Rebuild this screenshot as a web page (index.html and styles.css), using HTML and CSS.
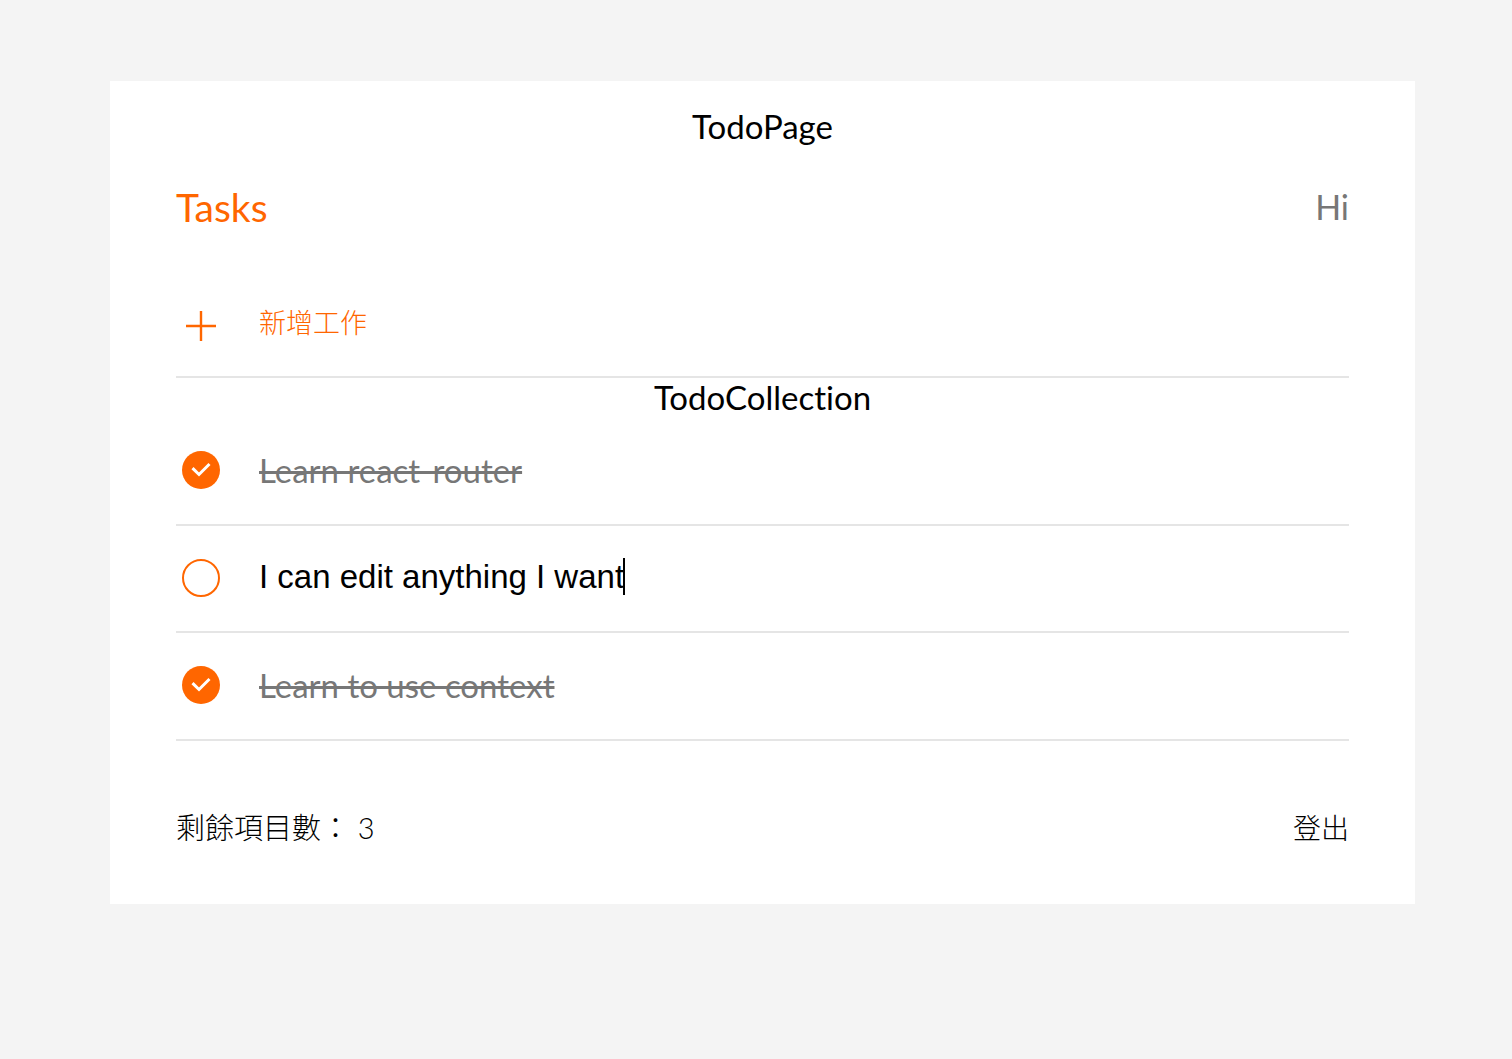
FILE: index.html
```html
<!DOCTYPE html>
<html lang="zh-Hant">
<head>
<meta charset="utf-8">
<meta name="viewport" content="width=device-width, initial-scale=1">
<title>TodoPage</title>
<link rel="stylesheet" href="styles.css">
</head>
<body>
<main class="page">
  <div class="label">TodoPage</div>
  <header class="header">
    <h1 class="title">Tasks</h1>
    <span class="user">Hi</span>
  </header>
  <form class="row row-add">
    <label class="icon" for="new-task">
      <svg width="30" height="30" viewBox="0 0 30 30" aria-hidden="true"><path d="M15 0v30M0 15h30" stroke="#ff6600" stroke-width="2.4" fill="none"/></svg>
    </label>
    <input class="field field-add" id="new-task" type="text" placeholder="新增工作" aria-label="新增工作">
  </form>
  <div class="label">TodoCollection</div>
  <ul class="list">
    <li class="row">
      <input class="check" type="checkbox" id="t1" checked>
      <label class="task" for="t1">Learn react-router</label>
    </li>
    <li class="row">
      <input class="check" type="checkbox" id="t2" aria-label="I can edit anything I want">
      <div class="editor">
        <input class="field field-edit" id="edit" type="text" value="I can edit anything I want" aria-label="編輯工作">
        <span class="caret"></span>
      </div>
    </li>
    <li class="row">
      <input class="check" type="checkbox" id="t3" checked>
      <label class="task" for="t3">Learn to use context</label>
    </li>
  </ul>
  <footer class="footer">
    <p class="count">剩餘項目數： 3</p>
    <button class="logout" type="button">登出</button>
  </footer>
</main>
</body>
</html>
```
FILE: styles.css
```css
* { box-sizing: border-box; }
body {
  margin: 0;
  padding: 81px 97px 81px 110px;
  background: #f4f4f4;
  color: #000;
  font: 33px/40px Lato, "Noto Sans CJK TC", sans-serif;
  font-variant-ligatures: none;
}
.page { background: #fff; padding: 26px 66px 56px; }
.label { text-align: center; line-height: 38px; }
.header {
  display: flex;
  justify-content: space-between;
  align-items: center;
  margin-top: 37px;
  line-height: 50px;
}
.title { margin: 0; color: #ff6600; font-size: 39px; font-weight: 400; }
.user { color: #777; font-size: 34px; }
.row {
  display: flex;
  align-items: center;
  gap: 33px;
  height: 108px;
  padding-bottom: 2px;
  border-bottom: 2px solid #e5e5e5;
}
.row-add { margin-top: 38px; padding-bottom: 2px; }
.icon { display: flex; justify-content: center; width: 50px; padding-top: 8px; }
.field {
  flex: 1;
  min-width: 0;
  height: 40px;
  padding: 0;
  border: 0;
  outline: 0;
  background: none;
  color: #000;
  font: 33px/40px "Liberation Sans", sans-serif;
}
.field-add { font: 300 27px/40px "Noto Sans CJK TC", sans-serif; }
.field-add::placeholder { color: #ff6600; opacity: 1; }
.editor { display: flex; flex: 1; align-items: center; min-width: 0; padding-bottom: 2px; }
.field-edit { flex: none; field-sizing: content; max-width: 100%; caret-color: transparent; }
.caret { flex: none; width: 2px; height: 37px; margin-left: -1px; background: #000; }
.list { margin: 2px 0 0; padding: 0; list-style: none; }
.list .row:nth-child(2) { height: 107px; }
.check {
  appearance: none;
  flex: none;
  width: 38px;
  height: 38px;
  margin: 0 6px;
  border: 2px solid #ff6600;
  border-radius: 50%;
}
.check:checked {
  border: 0;
  background: #ff6600 url("data:image/svg+xml,%3Csvg xmlns='http://www.w3.org/2000/svg' viewBox='0 0 38 38'%3E%3Cpath d='M10.5 17.2l6.5 6.3L27.5 13' fill='none' stroke='white' stroke-width='3'/%3E%3C/svg%3E");
}
.task { color: #777; text-decoration: line-through 3px; }
.footer {
  display: flex;
  justify-content: space-between;
  align-items: flex-start;
  margin-top: 67px;
}
.count, .logout {
  margin: 0;
  padding: 0;
  border: 0;
  background: none;
  color: #000;
  font: 300 29px/40px Lato, "Noto Sans CJK TC", sans-serif;
}
.logout { font-size: 28px; }
```
